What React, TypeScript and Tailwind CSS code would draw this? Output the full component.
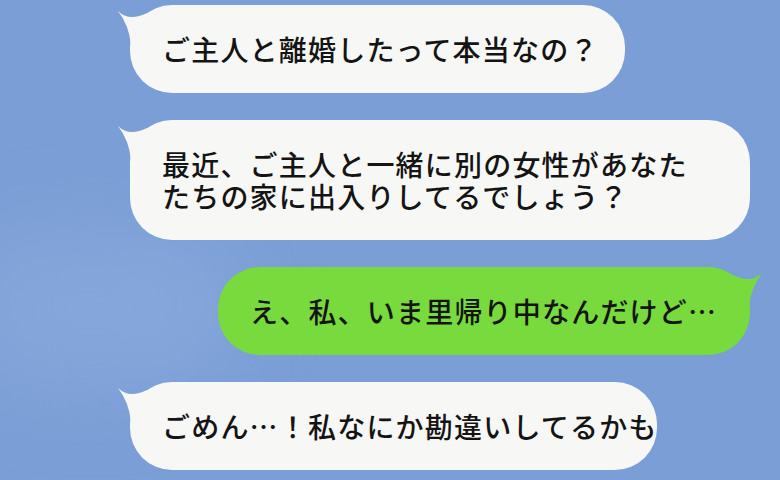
import React from "react";

const font = { fontFamily: '"Noto Sans CJK JP", "Noto Sans", sans-serif' };

function Tail({ color, side }: { color: string; side: "left" | "right" }) {
  return (
    <svg
      width="40"
      height="40"
      viewBox="0 0 40 40"
      className={
        side === "left"
          ? "absolute left-[-13px] top-0"
          : "absolute right-[-13px] top-0 -scale-x-100"
      }
    >
      <path d="M1 6 Q12 17 30 8 L40 40 L14 40 Q12 20 1 6 Z" fill={color} />
    </svg>
  );
}

function Bubble({
  lines,
  mine,
  width,
}: {
  lines: string[];
  mine?: boolean;
  width: string;
}) {
  const color = mine ? "#78da3c" : "#f7f7f5";
  return (
    <div
      className={`relative ${width} rounded-[42px] py-[28px] pl-[32px] pr-4 ${
        mine ? "self-end mr-[30px] bg-[#78da3c]" : "ml-[130px] bg-[#f7f7f5]"
      }`}
    >
      <Tail color={color} side={mine ? "right" : "left"} />
      <div
        className="relative text-[28px] leading-[32px] tracking-[1.2px] font-medium text-[#141414] whitespace-nowrap"
        style={font}
      >
        {lines.map((l) => (
          <div key={l}>{l}</div>
        ))}
      </div>
    </div>
  );
}

export default function App() {
  return (
    <div className="relative w-[780px] h-[480px] overflow-hidden bg-[#7b9ed6]">
      <div className="absolute left-[-40px] top-[230px] w-[260px] h-[160px] rounded-full bg-[#8eaede] opacity-50 blur-2xl" />
      <div className="absolute left-[120px] top-[260px] w-[140px] h-[90px] rounded-full bg-[#8aaadc] opacity-40 blur-2xl" />
      <div className="relative flex flex-col gap-[27px] pt-[5px]">
        <Bubble width="w-[495px]" lines={["ご主人と離婚したって本当なの？"]} />
        <Bubble
          width="w-[620px]"
          lines={["最近、ご主人と一緒に別の女性があなた", "たちの家に出入りしてるでしょう？"]}
        />
        <Bubble mine width="w-[532px]" lines={["え、私、いま里帰り中なんだけど…"]} />
        <Bubble width="w-[527px]" lines={["ごめん…！私なにか勘違いしてるかも"]} />
      </div>
    </div>
  );
}
